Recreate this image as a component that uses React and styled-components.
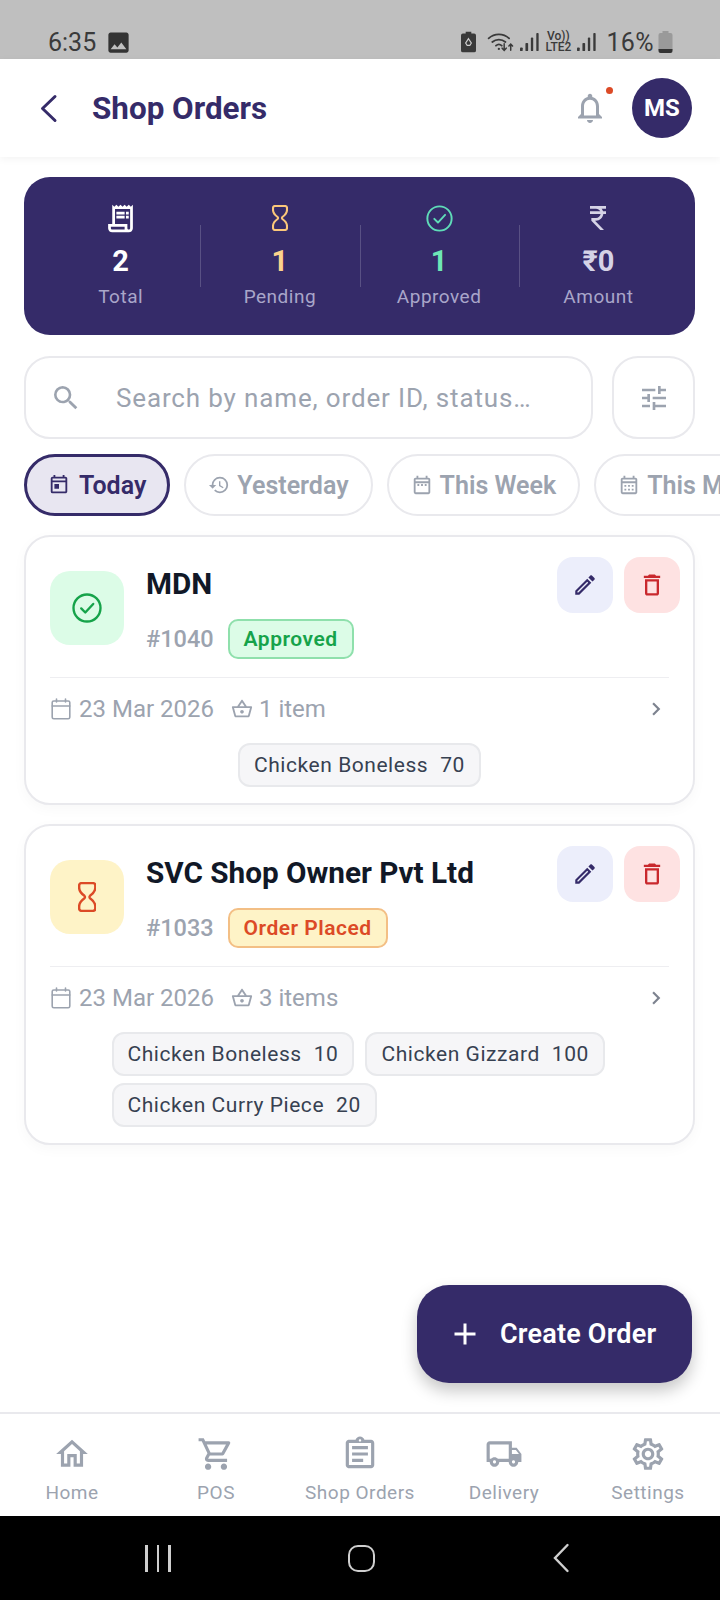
import React from 'react'
import styled, { createGlobalStyle } from 'styled-components'
import {
  MdOutlineReceiptLong,
  MdOutlineCurrencyRupee,
  MdSearch,
  MdOutlineTune,
  MdOutlineToday,
  MdOutlineDateRange,
  MdHistory,
  MdOutlineCalendarMonth,
  MdOutlineEdit,
  MdOutlineDelete,
  MdChevronRight,
  MdOutlineShoppingBasket,
  MdOutlineHome,
  MdOutlineShoppingCart,
  MdOutlineAssignment,
  MdOutlineLocalShipping,
  MdOutlineSettings,
  MdAdd,
  MdImage,
  MdOutlineNotifications,
} from 'react-icons/md'

const INDIGO = '#352b69'
const GREY = '#9ca3af'

const GlobalStyle = createGlobalStyle`
  * {
    box-sizing: border-box;
  }

  html, body {
    margin: 0;
    padding: 0;
    background: #fff;
    font-family: Roboto, "Noto Sans", sans-serif;
  }
`

const HourglassIcon = ({ size = 26 }) => (
  <svg width={(size * 16) / 26} height={size} viewBox="0 0 16 26" fill="none" stroke="currentColor" strokeWidth="2.1" strokeLinejoin="round">
    <path d="M3 1h10a2 2 0 0 1 2 2v2c0 3-2.500 5.500-4.600 7-.6.5-.6 1.500 0 2 2.100 1.500 4.600 4 4.600 7v2a2 2 0 0 1-2 2H3a2 2 0 0 1-2-2v-2c0-3 2.500-5.500 4.600-7 .6-.5.6-1.500 0-2C3.500 10.500 1 8 1 5V3a2 2 0 0 1 2-2z" />
  </svg>
)

const CheckCircleIcon = ({ size = 28, weight = 2 }) => (
  <svg width={size} height={size} viewBox="0 0 28 28" fill="none" stroke="currentColor" strokeWidth={weight} strokeLinecap="round" strokeLinejoin="round">
    <circle cx="14" cy="14" r="12.600" />
    <path d="M8.600 14.400l3.800 3.800 7.400-8" />
  </svg>
)

const BackIcon = () => (
  <svg width="19" height="29" viewBox="0 0 19 29" fill="none" stroke="currentColor" strokeWidth="3" strokeLinecap="round" strokeLinejoin="round">
    <path d="M16 2.500L3.500 14.500 16 26.500" />
  </svg>
)

const CalendarIcon = () => (
  <svg width="20" height="22" viewBox="0 0 20 22" fill="none" stroke="currentColor" strokeWidth="1.600" strokeLinecap="round">
    <rect x="1.200" y="3" width="17.600" height="17.800" rx="1.600" />
    <path d="M1.200 8h17.600M5.500 1v3M14.500 1v3" />
  </svg>
)

const BatterySaverIcon = () => (
  <svg width="15" height="22" viewBox="0 0 16 22">
    <path fill="#3a3a3a" d="M5 0h6v2h3a2 2 0 0 1 2 2v16a2 2 0 0 1-2 2H2a2 2 0 0 1-2-2V4a2 2 0 0 1 2-2h3z" />
    <path fill="none" stroke="#cfcfcf" strokeWidth="1.300" d="M8 7.500l3 4.600-1.600 2.600H6.600L5 12.100z" />
  </svg>
)

const WifiIcon = () => (
  <svg width="27" height="20" viewBox="0 0 33 24" fill="none" stroke="#3a3a3a" strokeLinecap="round">
    <path strokeWidth="2.200" d="M2 7.500C9 1 20 1 27 7.500M6.500 12C11 8 18 8 22.500 12M11 16.500c2-1.800 5-1.800 7 0" />
    <path strokeWidth="1.800" d="M21 14v8M18.500 19.500l2.500 2.800 2.500-2.800M29 22v-7M26.800 17l2.200-2.500 2.200 2.500" />
    <circle cx="14.500" cy="20.500" r="1.400" fill="#3a3a3a" stroke="none" />
  </svg>
)

const SignalIcon = () => (
  <svg width="19" height="20" viewBox="0 0 21 22" fill="#3a3a3a">
    <rect x="0" y="17" width="3" height="4" rx="1" />
    <rect x="6" y="12" width="3" height="9" rx="1" />
    <rect x="12" y="6" width="2.600" height="15" rx="1" />
    <rect x="18" y="1" width="2.600" height="20" rx="1" />
  </svg>
)

const BatteryIcon = () => (
  <svg width="15" height="22" viewBox="0 0 14 22">
    <path fill="#9a9a9a" d="M4 0h6v2h2a2 2 0 0 1 2 2v15H0V4a2 2 0 0 1 2-2h2z" />
    <path fill="#333" d="M0 18h14v2a2 2 0 0 1-2 2H2a2 2 0 0 1-2-2z" />
  </svg>
)

const stats = [
  { icon: <MdOutlineReceiptLong size={33} />, iconColor: '#ffffff', value: '2', valueColor: '#ffffff', label: 'Total' },
  { icon: <HourglassIcon size={26} />, iconColor: '#fbc77a', value: '1', valueColor: '#fcd38c', label: 'Pending' },
  { icon: <CheckCircleIcon size={27} />, iconColor: '#5fdcb8', value: '1', valueColor: '#6ee7b7', label: 'Approved' },
  { icon: <MdOutlineCurrencyRupee size={32} />, iconColor: '#d5d3e6', value: '₹0', valueColor: '#d5d3e6', label: 'Amount' },
]

const filters = [
  { icon: <MdOutlineToday size={22} />, label: 'Today', active: true },
  { icon: <MdHistory size={22} />, label: 'Yesterday' },
  { icon: <MdOutlineDateRange size={22} />, label: 'This Week' },
  { icon: <MdOutlineCalendarMonth size={22} />, label: 'This Month' },
]

const orders = [
  {
    name: 'MDN',
    id: '#1040',
    tone: 'green',
    status: 'Approved',
    date: '23 Mar 2026',
    count: '1 item',
    items: [['Chicken Boneless', 70]],
  },
  {
    name: 'SVC Shop Owner Pvt Ltd',
    id: '#1033',
    tone: 'amber',
    status: 'Order Placed',
    date: '23 Mar 2026',
    count: '3 items',
    items: [
      ['Chicken Boneless', 10],
      ['Chicken Gizzard', 100],
      ['Chicken Curry Piece', 20],
    ],
  },
]

const navItems = [
  { icon: <MdOutlineHome size={38} />, label: 'Home' },
  { icon: <MdOutlineShoppingCart size={38} />, label: 'POS' },
  { icon: <MdOutlineAssignment size={38} />, label: 'Shop Orders' },
  { icon: <MdOutlineLocalShipping size={38} />, label: 'Delivery' },
  { icon: <MdOutlineSettings size={38} />, label: 'Settings' },
]

export default function App() {
  return (
    <Page>
      <GlobalStyle />
      <StatusBar>
        <StatusGroup>
          <Clock>6:35</Clock>
          <MdImage size={27} color="#333" />
        </StatusGroup>
        <StatusGroup>
          <BatterySaverIcon />
          <IconSlot $ml={5}>
            <WifiIcon />
          </IconSlot>
          <SignalIcon />
          <Volte>
            <span>Vo))</span>
            <span>LTE2</span>
          </Volte>
          <SignalIcon />
          <Percent>16%</Percent>
          <BatteryIcon />
        </StatusGroup>
      </StatusBar>

      <Header>
        <BackButton>
          <BackIcon />
        </BackButton>
        <Title>Shop Orders</Title>
        <Bell>
          <MdOutlineNotifications size={36} />
          <BellDot />
        </Bell>
        <Avatar>MS</Avatar>
      </Header>

      <Main>
        <StatsCard>
          {stats.map((s) => (
            <Stat key={s.label}>
              <StatIcon $color={s.iconColor}>{s.icon}</StatIcon>
              <StatValue $color={s.valueColor}>{s.value}</StatValue>
              <StatLabel>{s.label}</StatLabel>
            </Stat>
          ))}
        </StatsCard>

        <SearchRow>
          <SearchBox>
            <MdSearch size={32} color={GREY} />
            <Placeholder>Search by name, order ID, status…</Placeholder>
          </SearchBox>
          <FilterButton>
            <MdOutlineTune size={32} />
          </FilterButton>
        </SearchRow>

        <FilterRow>
          {filters.map((f) => (
            <FilterChip key={f.label} $active={f.active}>
              {f.icon}
              {f.label}
            </FilterChip>
          ))}
        </FilterRow>

        <OrderList>
          {orders.map((o) => (
            <OrderCard key={o.id}>
              <CardActions>
                <ActionButton $tone="edit">
                  <MdOutlineEdit size={26} />
                </ActionButton>
                <ActionButton $tone="delete">
                  <MdOutlineDelete size={28} />
                </ActionButton>
              </CardActions>
              <CardTop>
                <StatusIcon $tone={o.tone}>
                  {o.tone === 'green' ? <CheckCircleIcon size={30} weight={2.2} /> : <HourglassIcon size={30} />}
                </StatusIcon>
                <CardInfo>
                  <OrderName>{o.name}</OrderName>
                  <IdRow>
                    <OrderId>{o.id}</OrderId>
                    <Badge $tone={o.tone}>{o.status}</Badge>
                  </IdRow>
                </CardInfo>
              </CardTop>
              <Divider />
              <MetaRow>
                <MetaItem>
                  <CalendarIcon />
                  {o.date}
                </MetaItem>
                <MetaItem $tight>
                  <MdOutlineShoppingBasket size={22} />
                  {o.count}
                </MetaItem>
                <MetaChevron>
                  <MdChevronRight size={26} />
                </MetaChevron>
              </MetaRow>
              <ItemWrap>
                {o.items.map(([name, qty]) => (
                  <ItemChip key={name}>
                    {name}
                    <span>{qty}</span>
                  </ItemChip>
                ))}
              </ItemWrap>
            </OrderCard>
          ))}
        </OrderList>
      </Main>

      <CreateButton>
        <MdAdd size={36} />
        Create Order
      </CreateButton>

      <BottomNav>
        {navItems.map((n) => (
          <NavItem key={n.label}>
            {n.icon}
            <span>{n.label}</span>
          </NavItem>
        ))}
      </BottomNav>

      <SystemBar>
        <SysLines>
          <i />
          <i />
          <i />
        </SysLines>
        <SysHome />
        <svg width="18" height="30" viewBox="0 0 18 30" fill="none" stroke="#cfcfcf" strokeWidth="2.400" strokeLinecap="round">
          <path d="M15.500 2L3 15l12.500 13" />
        </svg>
      </SystemBar>
    </Page>
  )
}

const toneBg = { green: '#dcfce7', amber: '#fef3c7' }
const toneText = { green: '#16a34a', amber: '#dc4a26' }
const toneBorder = { green: '#8fe0ac', amber: '#f3bf85' }

const Page = styled.div`
  position: relative;
  width: 720px;
  height: 1600px;
  overflow: hidden;
  display: flex;
  flex-direction: column;
  background: #fff;
`

const StatusBar = styled.div`
  height: 59px;
  flex: none;
  display: flex;
  align-items: flex-end;
  justify-content: space-between;
  padding: 0 47px 0 48px;
  background: #bfbfbf;
  color: #3a3a3a;
`

const StatusGroup = styled.div`
  display: flex;
  align-items: center;
  gap: 6px;
  height: 34px;
`

const IconSlot = styled.span`
  display: flex;
  margin-left: ${(p) => p.$ml}px;
`

const Clock = styled.span`
  font-size: 25px;
  margin-right: 3px;
`

const Percent = styled.span`
  font-size: 25px;
  letter-spacing: 0.4px;
  margin: 0 -2px 0 4px;
`

const Volte = styled.div`
  display: flex;
  flex-direction: column;
  align-items: center;
  font-size: 12px;
  line-height: 11px;
  font-weight: 500;
`

const Header = styled.header`
  position: relative;
  z-index: 1;
  height: 98px;
  flex: none;
  display: flex;
  align-items: center;
  padding: 0 28px 0 39px;
  background: #fff;
  box-shadow: 0 2px 8px rgba(0, 0, 0, 0.05);
`

const BackButton = styled.div`
  display: flex;
  width: 53px;
  color: ${INDIGO};
`

const Title = styled.h1`
  flex: 1;
  margin: 0;
  font-size: 31.4px;
  font-weight: 700;
  color: ${INDIGO};
`

const Bell = styled.div`
  position: relative;
  display: flex;
  margin-right: 24px;
  color: ${GREY};
`

const BellDot = styled.span`
  position: absolute;
  top: -3px;
  right: -5px;
  width: 7px;
  height: 7px;
  border-radius: 50%;
  background: #dc4a26;
`

const Avatar = styled.div`
  width: 60px;
  height: 60px;
  display: flex;
  align-items: center;
  justify-content: center;
  border-radius: 50%;
  background: ${INDIGO};
  color: #fff;
  font-size: 24px;
  font-weight: 700;
`

const Main = styled.main`
  flex: 1;
  min-height: 0;
  padding: 20px 25px 0 24px;
  display: flex;
  flex-direction: column;
`

const StatsCard = styled.section`
  height: 158px;
  flex: none;
  display: grid;
  grid-template-columns: repeat(4, 1fr);
  padding: 0 17px;
  border-radius: 26px;
  background: ${INDIGO};
`

const Stat = styled.div`
  position: relative;
  display: flex;
  flex-direction: column;
  align-items: center;
  padding-top: 25px;

  & + &::before {
    content: '';
    position: absolute;
    left: 0;
    top: 48px;
    height: 62px;
    width: 1px;
    background: rgba(255, 255, 255, 0.18);
  }
`

const StatIcon = styled.div`
  height: 32px;
  display: flex;
  align-items: center;
  color: ${(p) => p.$color};
`

const StatValue = styled.div`
  margin-top: 10px;
  font-size: 29px;
  line-height: 34px;
  font-weight: 700;
  color: ${(p) => p.$color};
`

const StatLabel = styled.div`
  margin-top: 6px;
  font-size: 19px;
  line-height: 26px;
  color: #a9a6c9;
  letter-spacing: 0.5px;
`

const SearchRow = styled.div`
  margin-top: 21px;
  display: flex;
  gap: 19px;
  height: 83px;
  flex: none;
`

const SearchBox = styled.div`
  flex: 1;
  display: flex;
  align-items: center;
  gap: 34px;
  padding-left: 24px;
  border: 2px solid #e9e9ed;
  border-radius: 26px;
`

const Placeholder = styled.span`
  font-size: 26px;
  letter-spacing: 0.85px;
  color: ${GREY};
`

const FilterButton = styled.div`
  width: 83px;
  display: flex;
  align-items: center;
  justify-content: center;
  border: 2px solid #e9e9ed;
  border-radius: 26px;
  color: ${GREY};
`

const FilterRow = styled.div`
  margin: 15px -25px 0 0;
  height: 62px;
  flex: none;
  display: flex;
  gap: 14px;
`

const FilterChip = styled.div`
  flex: none;
  display: flex;
  align-items: center;
  gap: ${(p) => (p.$active ? 9 : 7)}px;
  padding: 0 ${(p) => (p.$active ? 21 : 22)}px;
  border-radius: 31px;
  border: ${(p) => (p.$active ? `3px solid ${INDIGO}` : '2px solid #e9e9ed')};
  background: ${(p) => (p.$active ? '#e8e6f1' : '#fff')};
  color: ${(p) => (p.$active ? INDIGO : GREY)};
  font-size: 25px;
  font-weight: 600;
`

const OrderList = styled.div`
  margin-top: 19px;
  display: flex;
  flex-direction: column;
  gap: 19px;
`

const OrderCard = styled.article`
  position: relative;
  padding: 31px 24px 16px;
  border: 2px solid #e9e9ed;
  border-radius: 26px;
  background: #fff;
  box-shadow: 0 4px 14px rgba(0, 0, 0, 0.03);
`

const CardActions = styled.div`
  position: absolute;
  top: 20px;
  right: 13px;
  display: flex;
  gap: 11px;
`

const ActionButton = styled.div`
  width: 56px;
  height: 56px;
  display: flex;
  align-items: center;
  justify-content: center;
  border-radius: 16px;
  background: ${(p) => (p.$tone === 'edit' ? '#eceefb' : '#fee2e2')};
  color: ${(p) => (p.$tone === 'edit' ? INDIGO : '#c9282d')};
`

const CardTop = styled.div`
  display: flex;
  gap: 22px;
`

const StatusIcon = styled.div`
  width: 74px;
  height: 74px;
  margin-top: 3px;
  flex: none;
  display: flex;
  align-items: center;
  justify-content: center;
  border-radius: 20px;
  background: ${(p) => toneBg[p.$tone]};
  color: ${(p) => toneText[p.$tone]};
`

const CardInfo = styled.div`
  min-width: 0;
`

const OrderName = styled.div`
  font-size: 29.7px;
  line-height: 32px;
  font-weight: 700;
  color: #111827;
`

const IdRow = styled.div`
  margin-top: 19px;
  display: flex;
  align-items: center;
  gap: 14px;
`

const OrderId = styled.span`
  font-size: 23.5px;
  font-weight: 500;
  color: ${GREY};
`

const Badge = styled.span`
  height: 40px;
  display: flex;
  align-items: center;
  padding: 0 14px;
  border-radius: 10px;
  border: 2px solid ${(p) => toneBorder[p.$tone]};
  background: ${(p) => toneBg[p.$tone]};
  color: ${(p) => toneText[p.$tone]};
  font-size: 21px;
  font-weight: 600;
  letter-spacing: 0.5px;
`

const Divider = styled.div`
  margin-top: 18px;
  height: 1px;
  background: #eeeef1;
`

const MetaRow = styled.div`
  margin-top: 15px;
  height: 32px;
  display: flex;
  align-items: center;
  gap: 17px;
  padding-left: 1px;
  color: ${GREY};
`

const MetaItem = styled.div`
  display: flex;
  align-items: center;
  gap: ${(p) => (p.$tight ? 6 : 8)}px;
  font-size: 24px;
`

const MetaChevron = styled.div`
  display: flex;
  margin-left: auto;
  color: #7d838f;
`

const ItemWrap = styled.div`
  width: fit-content;
  max-width: 496px;
  margin: 18px auto 0;
  display: flex;
  flex-wrap: wrap;
  gap: 7px 11px;
`

const ItemChip = styled.div`
  height: 44px;
  display: flex;
  align-items: center;
  gap: 12px;
  padding: 0 14px;
  border: 2px solid #e8e9ec;
  border-radius: 12px;
  background: #f6f6f8;
  color: #374151;
  font-size: 21px;
  letter-spacing: 0.55px;
`

const CreateButton = styled.div`
  position: absolute;
  top: 1285px;
  right: 28px;
  width: 275px;
  height: 98px;
  display: flex;
  align-items: center;
  gap: 17px;
  padding-left: 30px;
  border-radius: 32px;
  background: ${INDIGO};
  color: #fff;
  font-size: 27px;
  font-weight: 600;
  letter-spacing: 0.2px;
  box-shadow: 0 8px 16px rgba(0, 0, 0, 0.22);
`

const BottomNav = styled.nav`
  height: 104px;
  flex: none;
  display: grid;
  grid-template-columns: repeat(5, 1fr);
  padding-top: 21px;
  border-top: 2px solid #e9e9ed;
  background: #fff;
`

const NavItem = styled.div`
  display: flex;
  flex-direction: column;
  align-items: center;
  gap: 8px;
  color: ${GREY};
  font-size: 19px;
  line-height: 24px;
  letter-spacing: 0.5px;
`

const SystemBar = styled.div`
  height: 84px;
  flex: none;
  display: flex;
  align-items: center;
  justify-content: space-between;
  padding: 0 150px 0 145px;
  background: #000;
`

const SysLines = styled.div`
  display: flex;
  gap: 9px;

  i {
    display: block;
    width: 2.5px;
    height: 27px;
    background: #cfcfcf;
  }
`

const SysHome = styled.div`
  width: 27px;
  height: 27px;
  border: 2.5px solid #cfcfcf;
  border-radius: 10px;
`
